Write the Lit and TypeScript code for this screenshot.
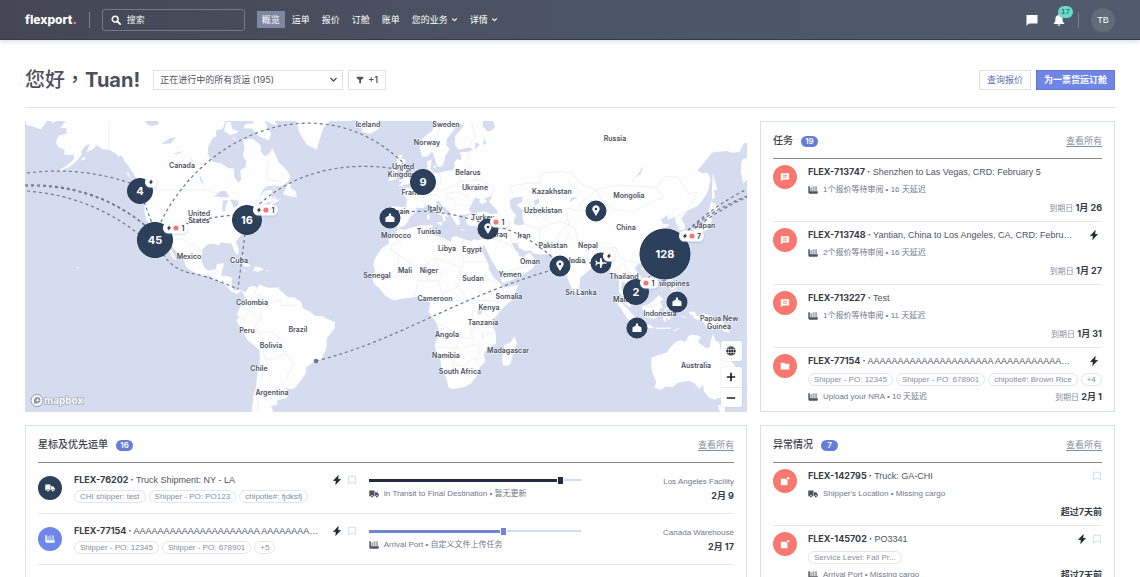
import { LitElement, html, svg, css, nothing } from "lit";
import { customElement, property } from "lit/decorators.js";
import { classMap } from "lit/directives/class-map.js";

/* ---------- geography ---------- */

const PX_PER_DEGREE = 2.13;
const RADIUS = (PX_PER_DEGREE * 180) / Math.PI;

function project(lon: number, lat: number): string {
  const merc = Math.log(Math.tan(Math.PI / 4 + (lat * Math.PI) / 360));
  return `${(409.5 + PX_PER_DEGREE * lon).toFixed(1)} ${(310 - RADIUS * merc).toFixed(1)}`;
}

function trace(points: string, close = true): string {
  const list = points
    .trim()
    .split(/\s+/)
    .map((p) => p.split(",").map(Number))
    .map(([lon, lat]) => project(lon, lat));
  return `M${list.join("L")}${close ? "Z" : ""}`;
}

const LAND = [
  // Americas
  `-168,70 -168,65.6 -164,66.2 -161,66.2 -164,64.7 -161,64.6 -161,63.5 -164.5,63.1 -166,61.6 -165,60.6 -162,59.9 -162,58.7 -158.8,58.6 -157.5,58.6 -157.6,57.5 -161,55.9 -164.8,54.6 -163,54.7 -159,55.8 -156,57.3 -153.8,58.8 -154.2,59.4 -152.2,60.8 -150,61.2 -151.6,59.3 -148.5,60 -147,61 -144,60 -141,59.9 -138,59 -136.6,58.2 -135,58.5 -134,57.3 -132,56 -130.5,54.6 -128,52.2 -127.3,51 -124.8,50 -123,49 -122.4,47.3 -124.7,48.3 -124,46.3 -124.5,42.8 -123.8,39.3 -122.4,37.5 -120.6,34.6 -118.4,33.8 -117.2,32.6 -116,30.5 -114.2,28.2 -115,27.8 -112.3,26 -112,24.6 -110,22.9 -109.5,23.3 -111.2,26 -112.8,28.4 -114.8,31.6 -113.1,31.2 -112,29 -109.4,26.5 -108,25 -106,23 -105.3,20.7 -104.3,19.2 -101.8,17.8 -98.5,16.3 -96,15.7 -94,16.2 -91.5,14 -87.7,13 -85.8,11 -83.7,8.8 -82.5,8.2 -81,7.4 -80,8.4 -79,8.9 -78,7.8 -77.4,6.5 -77.4,4 -79,1.8 -80,0.5 -81,-2.2 -80,-3.3 -81.3,-5 -79.5,-7.8 -77.2,-12 -76,-14 -73,-16.5 -70.4,-18.4 -70.2,-22 -70.8,-26 -71.6,-30 -72,-34 -73.3,-37.3 -73.6,-40 -74,-42 -73.2,-46 -67,-46 -65.3,-44.5 -64,-42.8 -65,-41 -62.3,-40.7 -62,-39 -57.6,-38.1 -56.8,-36.4 -58.4,-34 -56.5,-34.8 -54,-34.6 -51.5,-32 -48.6,-28.3 -48.5,-26 -44,-23 -42,-23 -40.5,-21 -39,-17.5 -38.8,-13 -37,-11 -35,-8.3 -35,-5.5 -37.5,-4.7 -41,-2.9 -44.5,-2.7 -47,-0.7 -50,0.8 -51,4 -54,5.9 -57,6 -60,8.5 -62,10.5 -66,10.4 -68.3,11 -70,12 -71.3,11 -71.2,9.5 -72,10.8 -73,11.3 -75.5,10.7 -77,8.2 -79.6,9.5 -82,9 -83.6,11 -83.2,14.9 -86,15.9 -88.5,15.8 -88,18.2 -86.9,21.4 -90.3,21.1 -91,18.8 -94.5,18.2 -96.2,19.3 -97.8,22.5 -97.2,27.5 -94.6,29.5 -91.5,29.6 -89.4,29 -88.5,30.3 -85.5,29.8 -83.8,30 -82.7,27.8 -81.2,25.2 -80.2,25.6 -80.2,27.5 -81.4,30.5 -79,33.2 -76,35 -76,37 -74.2,39.5 -73.8,40.8 -70.3,41.7 -70.8,43 -67,44.8 -64.8,45.5 -66,43.5 -63.5,44.6 -60.2,46.2 -61.5,45.9 -64.5,46.2 -65,47.8 -64.3,49 -67.5,48.8 -70.5,47 -68.5,49.3 -66.5,50.2 -60,50.2 -57,51.5 -55.8,53 -57.5,54.7 -61.5,56.8 -62.5,58.3 -64.5,60.3 -66,58.8 -68,58.3 -69.8,59.5 -69.8,60.9 -73.5,62.4 -78,62.4 -77.5,60 -78.3,58.5 -76.6,57 -77,55.5 -79.5,54.7 -79,52 -80.5,51.2 -82.3,53 -82.3,55.1 -85,55.3 -88.5,56.5 -92.5,57 -94.7,58.8 -94.5,60.5 -92.5,62.5 -90.5,63 -91,64 -87.5,64.6 -86.5,66 -86,70`,
  `-180,70 -180,65.2 -177,65 -173,64.3 -170,66.2 -175,67.2`,
  `-61,67.5 -64,66.4 -62,65.2 -65,65.4 -68,66.2 -66.5,64.6 -65,63.5 -66,62 -71,63 -74,64.5 -78,64.5 -77,65.4 -73.5,65.5 -72.5,70 -62,70`,
  `-87,64 -84,63.2 -81,63.6 -80.3,64 -83,64.3 -84,65.8 -86,65.8`,
  `-84,62.9 -82,62.5 -80,61.8 -82,62.2`,
  `-54,70 -53.5,67 -52,64 -50,62.3 -48,61 -43.5,59.9 -42.3,62 -40.5,64.5 -38,65.7 -33,68 -33,70`,
  `-24,65.5 -22.2,65.2 -24,64.8 -22,64.4 -22.6,63.9 -18.5,63.4 -14.8,64.3 -13.7,65 -14.8,66.1 -17,66.1 -20,66 -21.4,65.4 -22.5,66.4`,
  `-59.3,47.7 -55.8,46.9 -53,46.7 -53.2,48.5 -55.8,49.6 -55.6,51.5 -57.5,50.5`,
  `-128.3,50.6 -125,50 -123.4,48.5 -125.5,48.9`,
  `-133,54 -131.7,54 -131.3,52.3`,
  `-154.5,57.3 -152.2,58.3 -152.5,57.4`,
  `-64.4,46.9 -62,46.5 -63.5,46.2`,
  `-64.3,49.9 -61.8,49.1 -63.5,49.3`,
  `-85,22 -82.5,23.1 -79.5,22.8 -74.2,20.2 -77.5,19.9 -78,20.8 -82,22.3`,
  `-74.4,18.4 -72.7,18.5 -73.2,19.9 -69.9,19.7 -68.4,18.6 -71.5,17.7`,
  `-78.3,18.4 -76.3,18 -77.5,17.8`,
  `-67.2,18.5 -65.6,18.4 -67.1,18`,
  `-78.2,25.1 -77.8,24.3 -78.3,24.4`,
  `-61.8,10.7 -60.9,10.8 -61.1,10.1`,
  `-156,20.1 -155,19.5 -155.8,19.1`,
  // Eurasia and Africa
  `12,72 12.5,67.5 13,66 10.5,64 8,63.2 5.2,62 5,60 6,58.2 8.2,58.2 10.6,59.4 11.3,58.8 12.8,56 14.3,55.5 16,56.3 16.8,58.5 19,60 17.2,61 17.6,62.4 21.3,64.5 22,65.7 25.3,65.2 25,64.8 21.5,63 21.4,61 23,59.9 28,60.4 30,60 28,59.5 23.5,59.2 24.4,58.3 24,57.2 22.6,57.7 21.1,56.8 21.1,55.3 19.8,54.5 18.6,54.7 14.2,54 11,54 10.9,54.4 9.8,55 10.5,57.6 8.2,57 8.5,55 8.7,54 5,53.4 3.6,51.4 1.6,50.7 0,49.5 -1.5,49.7 -1.5,48.6 -4.7,48.4 -2.5,47.3 -1.2,46 -1.6,43.4 -4,43.5 -8,43.7 -9.2,42.8 -8.8,40 -9.4,38.7 -8.9,37 -6.4,36.8 -5.5,36 -2.2,36.8 -0.5,38.3 -0.3,39.5 3.2,42 3.2,43.2 6.5,43.1 8.8,44.4 10.5,43 12.3,41.7 15.6,40 16,38 17,39 16.6,40.3 18.4,40 16,41.9 13.6,43.6 12.4,45 13.7,45.6 15,44.2 18.8,42 19.5,40.5 21,38.5 22.5,36.6 24,37.8 22.8,39.8 24,40.8 26,40.8 29,41.2 28,42.7 29.7,45.2 31,46.6 33.5,46 32.6,45.4 34,44.4 36.4,45.3 35,46.3 39,47.2 37.4,45.2 39,44 41.5,42 41.3,41.2 38,41 35,42 32,41.6 29,41 26.3,40 27,37.3 28.5,36.7 30.6,36.8 32.5,36 36,36.8 35.8,35 34.6,31.7 32.5,31.2 30.5,31.4 29,30.8 25,31.6 22,32.8 20,32.3 19.5,30.4 15.3,32.3 11,33.3 10.3,34.5 11,37 5,36.8 0,35.8 -2.2,35.1 -5.4,35.9 -6.5,34 -9.8,31.4 -9.7,29.7 -13,27.8 -16,23.8 -17,21 -16.2,18.5 -17.4,14.7 -16.7,12.4 -13.5,9.5 -11.5,6.9 -7.6,4.4 -4,5.2 1,5.9 4.3,6.3 6,4.3 8.7,4.6 9.7,3.5 9.3,0.5 8.8,-0.8 12,-5 13.6,-8.5 13.5,-12.5 11.8,-16 12.5,-19 14.5,-22.8 15.2,-27 17.3,-30.5 18.3,-34 20,-34.8 25.7,-34 29,-32.5 32.3,-28.5 32.9,-26 35.5,-23.8 35,-20 37,-17.7 40.6,-15.5 40.5,-10.7 39.2,-8 38.8,-6 39.6,-4.3 41.7,-1.6 44,1.1 48,4.5 51.2,11.9 44.5,10.4 43.2,11.8 39.7,15 37.3,18.8 37.2,21 35.5,24 33.5,27.8 32.5,30 34.2,27.9 34.9,29.5 35.5,28 39,22 42.6,16.7 43.4,12.7 45,12.8 52,15.6 55.2,17.5 57.8,19 59.8,22.5 58.5,23.7 56.4,26.3 54,24.2 51.6,24.3 51,26 50,26.7 48,30 50.5,30 51.5,27.9 54.5,26.6 57,27 58,25.6 61.5,25.2 66.5,25.4 68.2,23.6 70.3,20.9 72.7,21.2 73,18 74.5,14 76.3,10 77.5,8 79.8,10.3 80.2,15 82.3,16.7 86.5,20 87,21.5 90.5,22.5 92,21.5 94.3,18.5 94.3,16 97,17 98.5,13 98.3,8.5 100.4,6 101,3 103.5,1.3 104.2,1.4 103.4,4.5 102,6.3 100.3,8.3 99.3,10.5 100,13.4 102.5,12 104.8,8.7 106.7,10.4 109.2,12 108.8,15.3 106,18.8 106,20 108.2,21.6 110,20.4 111,21.6 114,22.4 117,23.5 119.6,26 121.8,29 121.9,31.6 119.3,34.8 120.7,36.3 122.4,37.2 119,37.4 118,39 121,40.7 121.5,39 124.5,40 125.2,37.8 126.5,35 129.2,35.3 129.3,37 127.5,39.5 130.7,42.3 135.5,44 138.3,46.5 140.3,48.8 141.3,52.5 139.8,54.1 137.5,53.8 135.2,54.7 138,56.5 142,59.2 145.5,59.4 149,59.6 152,59.1 155,59.4 157,61.3 160,61.7 164,62.5 163,60 162,58 157,57.8 155.8,57 155.6,54 156.7,51 160,53 170,60 180,65 180,72`,
  `-5.5,50.1 -3.5,50.3 1.2,51.1 1.6,52.7 0.2,53 -1.5,55 -2.2,56 -1.9,57.6 -4,57.7 -3.2,58.6 -5,58.6 -6,56.7 -5,55 -3,54.9 -3,53.4 -4.5,53.3 -4.5,52.2 -5.1,51.7 -3,51.4`,
  `-10,51.6 -6.4,52.2 -6,53.5 -5.6,54.6 -7.3,55.3 -8.3,54.5 -10,54.2 -9,53.2`,
  `12.5,38 15.5,38.2 15.1,36.7`,
  `8.2,40.8 9.6,40.9 9.5,39.2 8.4,39`,
  `8.6,42.4 9.4,43 9.4,41.5`,
  `23.6,35.5 26.2,35.2 24.8,34.9`,
  `32.4,35 34.5,35.6 33.6,34.7`,
  `11,55.7 12.5,56 12,55`,
  `44,-25 43.3,-22 44.4,-19.5 44.3,-16.5 47.5,-15 49.3,-12.1 50.4,-15.5 49.4,-18 47.2,-24.8 45.4,-25.5`,
  `79.8,8.5 80.2,9.8 81.8,7.5 81,6.2 80,6.2`,
  `95.3,5.6 97.5,5.2 100.4,2.5 103,0 104.6,-2 106,-3.2 105.8,-5.8 104.5,-5.8 102.2,-4 100.3,-1 98.7,1.7`,
  `105.3,-6.8 106.2,-5.9 108.5,-6.7 110.8,-6.4 112.7,-6.9 114.5,-7.8 114.3,-8.6 110,-8.1 106.5,-7.4`,
  `115,-8.2 119,-8.3 122.8,-8.2 122.5,-8.8 119,-8.8 116,-8.9`,
  `123.6,-10.2 125,-8.9 127.2,-8.4 125,-9.6`,
  `109,1.5 109.7,2 111.3,2.4 113,3.2 115.5,5.4 117,7 119.2,5.2 117.8,4 118.9,1 117.4,0.5 116,-3.8 114.5,-4.1 111.5,-3.4 110,-1.4`,
  `119,-3.5 119.8,0.5 121,1.3 125,1.6 124,0.4 120.5,0.5 120.2,-0.9 123.3,-0.8 121.5,-1.9 122.8,-4.2 121.5,-4.6 120.8,-2.8 120.3,-5.5 119.5,-5.4`,
  `127.5,1.7 128.6,1.2 128,-0.7`,
  `126,-3.2 130.8,-3.5 129,-3 127.5,-3.2`,
  `131,-0.8 134,-0.8 135,-3.2 138,-1.7 141,-2.6 145,-4.2 147.8,-6.3 147,-7 150.7,-10.4 148,-10.2 144.5,-7.7 142.8,-9.2 139.5,-8.2 138,-5.5 133.5,-4 132.8,-2.8 134,-2.4 132,-2.3`,
  `148.5,-5.8 151,-5.6 152.3,-4.2 151.5,-4.3 149.8,-5.5`,
  `120.3,16 120.8,18.6 122.2,18.3 121.5,15.8 124,13 120.8,13.8`,
  `122,10.6 123.3,11.5 125.6,11.1 125,10.2 123,9.2`,
  `122,7 123.5,8.6 125.5,9.7 126.4,7 125.3,5.8 124,6.8`,
  `117.3,8.4 119.5,11.2 118.8,10`,
  `120.2,23 121.5,25.2 121,22.2`,
  `108.8,19.3 111,19.9 109.6,18.3`,
  `129.8,33 131,33.9 132,33 131,31.3 130.2,31.4`,
  `132.2,33.6 134.5,34.3 134,33.4`,
  `131,34.2 133,35.5 136,35.7 137,37.3 139.2,38 140,40 141.3,41.3 142,39.5 140.9,36 140,35.2 138,34.7 135.8,33.5 135.2,34.6`,
  `140.2,41.8 141.8,45.3 145.2,43.5 143.2,42.1`,
  `142,46 142,50 142.5,54 143.3,52 144.6,49 143,49 143.4,46.7`,
  `113.5,-22 114.2,-21.8 117,-20.7 121,-19.5 122.3,-17.3 125,-15 127,-13.9 129.5,-14.9 131,-12.2 132.6,-11.4 136.8,-12.2 135.5,-14.9 139.2,-17.5 140.9,-17.3 141.6,-14 142.5,-10.8 143.6,-14.2 145.4,-15 146.3,-18.8 149.5,-22 153,-25.3 153.4,-29 151.3,-33.5 150,-37.3 147,-38.2 144.5,-38.1 143.5,-38.8 140.5,-38 138.2,-35.6 137.8,-33 136,-34.7 134.2,-32.8 131.2,-31.5 126,-32.3 123.5,-33.9 120,-33.9 118,-35 115,-34.3 115.8,-32 114.2,-28.5 113.5,-26`,
  `144.7,-40.8 148.3,-40.9 148,-43 146.5,-43.6 145.3,-42.5`,
].map((p) => trace(p)).join("");

const LAKES = [
  `47,45.5 49,46.6 53,46.9 53,45.2 51,44.5 50.3,44.3 52.5,42.8 54.5,41.8 53,41.8 53,40 53.9,37.2 51,36.8 49,37.6 49.3,39.5 50.3,40.3 48.5,42 47.5,43.2`,
  `58.5,45.5 60.8,46.5 61,45 58.8,43.8`,
  `104,51.6 106,52.6 108.5,53.6 109.7,55.6 109,55.3 107,53.3 104.8,51.8`,
  `-92,46.8 -88.5,48.7 -86,48.6 -84.7,46.7 -87.5,46.6 -90,46.9`,
  `-87.8,42 -86.5,42 -86.3,44 -85,45.7 -87.5,45.6 -87.8,44`,
  `-84.5,45.8 -81,45.9 -80,44.6 -81.7,43.3 -82.5,43.2 -83.3,44.8`,
  `-83.2,41.8 -79,42.8 -81,41.8`,
  `-79.6,43.4 -76.4,44 -77,43.3`,
  `-98.7,53.7 -97.2,52 -96.5,50.5 -98,51.5`,
  `-124,66 -119,66.8 -117.5,65.4 -121,65 -123,65.3`,
  `-116.5,61.2 -112.5,62.5 -109.5,62.7 -112.3,61.3`,
  `-111,59 -106,59.6 -109,58.8`,
  `-102.5,58.3 -101.7,56.6 -102.4,57`,
  `31.8,0.3 34,0.3 33.8,-2 32,-2.4`,
  `29.3,-3.5 30.9,-8.4 30.1,-7`,
  `34,-10 35,-14 34.2,-12.5`,
  `30.8,60 33,61 31,61.7`,
  `34.5,61.1 36.3,61.2 35,62.6`,
  `34.5,66.8 39,66.2 40.3,64.8 38,64 36.5,64 34.5,65`,
  `76,46.6 79,46.8 75,45`,
].map((p) => trace(p)).join("");

const BORDERS = [
  "-141,59.9 -141,70",
  "-123,49 -95.2,49 -92,48.2 -89.5,48 -85,46.9 -82.5,45.3 -82.5,42 -79,43 -76.5,44.2 -74.7,45 -71.3,45.2 -69.2,47.4 -67.8,47 -67,44.8",
  "-117.2,32.6 -111,31.3 -106.5,31.8 -103,29 -101,29.5 -97.2,26",
  "-92.2,14.6 -91,17.6 -89.2,17.8",
  "-79,1.3 -75.2,0 -70,-4.2 -70,1.5 -67,1.5 -67.5,6 -72,7.2 -73,11",
  "-80.2,-3.4 -78,-4.8 -75.2,0",
  "-70,-4.2 -73,-7.3 -70.5,-11 -69,-12.5 -69.5,-17.5 -67,-23 -69.5,-30 -71,-38 -71.5,-44",
  "-70.5,-11 -65.3,-10 -60,-14 -58,-20 -62.5,-22.3 -67,-22.5",
  "-58,-20 -54.3,-24.5 -57.6,-30.2 -53.3,-33.7",
  "-67,1.5 -64,4 -60.7,5 -59.8,2 -52,2.3",
  "-2,35 -1.5,32.2 -8.7,28.7 -8.7,27.3 4.2,19.2 12,23.4 15,23 24,19.5 25,20 25,31.5",
  "25,22 37,22", "12,23.4 15.5,16 13.5,13.5 4,13.5 3.6,11.7 2.7,6.3",
  "13.5,13.5 15,9 15.5,7.5 22.8,11 24,15.7 24,19.5", "-8.7,27.3 -5,25 -6,15.5 -12,15.2 -16.5,16",
  "15.5,7.5 14.5,4.7 16.2,2.2 18.6,4 27.4,5 34,4.3 36,4.5 41.5,4 45,5 48,8",
  "22.8,11 27.4,5", "27.4,5 31,2.2 29.6,-1.3 29.4,-4.5 30.8,-8.3 28.5,-9.2 29.8,-13.4 24,-12.9 24,-10.9 22,-11 17.5,-8 12.3,-6",
  "24,-12.9 22,-16.2 23.4,-17.6 11.8,-17.3", "21,-18 21,-22 20,-28.5 16.5,-28.6", "20,-24.8 25.6,-25.6 29.4,-22.2 31.3,-22.4 32.8,-26",
  "25.3,-17.8 30.4,-15.7 32.8,-17 32.4,-21.3 31.3,-22.4", "34,-0.9 37.6,-3 39.2,-4.6", "34.6,-11.6 40.4,-10.5", "41,4 41,-1.6",
  "36.5,14.3 33,11 33,8 36,4.5", "36.5,14.3 42.4,12.5", "-1.8,43.3 3,42.4", "-7,41.9 -7,37.2",
  "2.6,51 6,49.5 8,49 7.6,47.6 6,46.3 7.5,43.8", "7,53.2 6,51 6,49.5", "7.6,47.6 13,47.5 13.7,46.5", "14.2,53.9 15,51 12,50.3 13.8,48.8 18.8,49.5 23.5,51.5 23.6,54 21,55.3",
  "17,48 22,48.4 24,47.9 28,46.8 28.2,45.5", "16.5,46.5 20,46.1 22.7,44.2 28,43.8", "23.6,51.5 31,52 34,52 40,49.6 38.2,47.1", "28,56.2 31,53 31.5,52", "27.5,57.5 28,59.4",
  "11.5,59 12.3,62 14,64.5 16,67", "28,61 31,62.8 29,66",
  "47,45.6 49,47.5 47,50 55,51 61,51 62,54 71,54.3 76,54 80,51 87.3,49.1 85,47 80,45 80.2,42.2 74,43 70,42 66,41.5 66,43 61,44.5 56,45 56,41.3 52.5,42",
  "87.3,49.1 98,50.5 103,50.2 116,49.8 120,53 126,52.8 131,47.8 135,48.4 131,43", "87.3,49.1 91,45 96,42.7 105,41.7 112,44.5 119.5,46.8 116,49.8",
  "74,43 74,39.5 75,37 78,35.4 79,31 82,30.2 88,28 92,27.8 97,28.2 98.5,24 102,22.4 108,21.5",
  "82,30.2 80.2,28.7 88,26.5 88,28", "75,37 70,34 69.5,31.8 66.4,29.8 61,29.8 61.5,25.2", "75,34 71,27.8 68.2,23.8", "61,29.8 61,35.5 66.5,37.4 71,38.3 75,37", "54,37.3 61,35.5", "56,41.3 60,42 66.5,37.4",
  "44.5,39.7 45.5,36 48,31 48,30", "36,36.8 42.3,37.2 44.8,37.2", "35,29.5 39,32 47,29.2 48.5,28.5", "43,17.4 49,18.5 55,20 55,22.7 52,23", "92.3,21 92.5,24 97,28", "88.8,26 89,22", "97.8,17 98.5,20 101,21.5 102.1,18 105.5,14.4 102.5,12.5", "105.5,14.4 107.5,12.5", "125,40 130.6,42.4", "126.8,37.8 128.3,38.6",
  "141,-2.6 141,-9.1", "109.6,1.8 114.5,1.5 117.8,4.2", "-60,51.5 -67,52 -67,55 -64.5,60",
].map((p) => trace(p, false)).join("");

const LABELS: [string, number, number][] = [
  ["Iceland", 368, 127], ["Sweden", 446, 127], ["Norway", 427, 145], ["United", 403, 169], ["Kingdom", 403, 177],
  ["Belarus", 468, 175], ["Ukraine", 475, 190], ["France", 413, 195], ["Spain", 400, 214], ["Italy", 435, 211],
  ["Turkey", 483, 220], ["Iraq", 501, 237], ["Iran", 524, 238], ["Morocco", 396, 238], ["Tunisia", 429, 234],
  ["Libya", 447, 251], ["Egypt", 472, 252], ["Oman", 530, 264], ["Senegal", 377, 278], ["Mali", 405, 273],
  ["Niger", 429, 273], ["Sudan", 473, 281], ["Yemen", 510, 277], ["Somalia", 509, 299], ["Cameroon", 435, 301],
  ["Kenya", 489, 310], ["Tanzania", 483, 325], ["Angola", 447, 337], ["Namibia", 446, 358], ["Madagascar", 508, 353],
  ["South Africa", 460, 374], ["Canada", 182, 168], ["United", 199, 216], ["States", 199, 223], ["Mexico", 189, 259],
  ["Cuba", 239, 263], ["Colombia", 252, 305], ["Peru", 247, 333], ["Brazil", 298, 332], ["Bolivia", 271, 348],
  ["Chile", 259, 371], ["Argentina", 272, 395], ["Russia", 615, 141], ["Kazakhstan", 552, 194], ["Mongolia", 629, 198],
  ["Uzbekistan", 543, 213], ["China", 626, 230], ["Pakistan", 553, 248], ["Nepal", 588, 248], ["India", 577, 263],
  ["Japan", 705, 228], ["Thailand", 624, 279], ["Philippines", 671, 286], ["Sri Lanka", 581, 295], ["Malaysia", 628, 302],
  ["Indonesia", 660, 316], ["Papua New", 719, 321], ["Guinea", 719, 329], ["Australia", 696, 368],
];

const ROUTES = [
  "M27 173Q82 166 133 184", "M25 185Q95 183 146 226", "M25 186Q95 184 147 227", "M27 191Q92 196 141 236",
  "M161 222C205 130 330 80 412 172", "M180 226Q206 217 235 215", "M144 202L152 223",
  "M255 208C300 165 360 160 412 172", "M245 234L238 289", "M163 254C172 268 182 272 200 275C215 279 228 285 238 289",
  "M316 361C400 340 450 300 552 270", "M400 213Q435 207 480 222", "M497 226Q530 236 554 259",
  "M688 230Q714 206 747 189", "M688 231Q716 208 747 196", "M690 232Q718 210 747 197", "M571 262L592 263", "M654 272L643 284",
];

type Glyph = "pin" | "port" | "plane";
interface MapNode { x: number; y: number; r: number; count?: string; glyph?: Glyph }
const NODES: MapNode[] = [
  { x: 140, y: 191, r: 12.5, count: "4" }, { x: 155, y: 240, r: 17.5, count: "45" }, { x: 247, y: 220, r: 14.5, count: "16" },
  { x: 423, y: 182, r: 12.5, count: "9" }, { x: 390, y: 218, r: 10, glyph: "port" }, { x: 488, y: 229, r: 10, glyph: "pin" },
  { x: 596, y: 211, r: 10, glyph: "pin" }, { x: 560, y: 266, r: 10, glyph: "pin" }, { x: 601, y: 263, r: 10, glyph: "plane" },
  { x: 665, y: 254, r: 25, count: "128" }, { x: 636, y: 292, r: 12.5, count: "2" }, { x: 677, y: 302, r: 10, glyph: "port" },
  { x: 637, y: 328, r: 10, glyph: "port" },
];

const FLAGS: { x: number; y: number; bolt: boolean; alerts?: string }[] = [
  { x: 145, y: 182, bolt: true }, { x: 163, y: 228, bolt: true, alerts: "1" }, { x: 253, y: 210, bolt: true, alerts: "1" },
  { x: 490, y: 222, bolt: false, alerts: "1" }, { x: 603, y: 256, bolt: true }, { x: 679, y: 236, bolt: true, alerts: "7" },
  { x: 640, y: 283, bolt: false, alerts: "1" },
];

/* ---------- icons, each on a 12 unit grid ---------- */

const boltPath = "M7.6 0.5L1.6 6.8H5L4.4 11.5L10.4 5.2H7Z";

const ICONS = {
  search: svg`<circle cx="5" cy="5" r="3.5" fill="none" stroke="currentColor" stroke-width="1.8"/><path d="M7.6 7.6L11 11" stroke="currentColor" stroke-width="2.2" stroke-linecap="round"/>`,
  chevron: svg`<path d="M2 4L6 8L10 4" fill="none" stroke="currentColor" stroke-width="1.8"/>`,
  filter: svg`<path d="M1 1H11V3.5L7.6 6V11H4.8V6L1 3.5Z" fill="currentColor"/>`,
  chat: svg`<path d="M0.5 1H11.5V9.5H3L0.5 11.8Z" fill="currentColor"/>`,
  bell: svg`<path d="M6 0.3C6.7 0.3 7 0.8 7 1.3C8.8 1.8 9.6 3.2 9.6 5C9.6 7.3 10 8.3 11.3 9.4V10H0.7V9.4C2 8.3 2.4 7.3 2.4 5C2.4 3.2 3.2 1.8 5 1.3C5 0.8 5.3 0.3 6 0.3ZM4.6 10.5H7.4A1.4 1.4 0 0 1 4.6 10.5Z" fill="currentColor"/>`,
  bolt: svg`<path d="${boltPath}" fill="currentColor" stroke="currentColor" stroke-width="0.6" stroke-linejoin="round"/>`,
  bookmark: svg`<path d="M2 1.5H10V10.8L6 8L2 10.8Z" fill="none" stroke="currentColor" stroke-width="0.9"/>`,
  truck: svg`<path d="M0.3 1.8H6.6V8.6H5A1.4 1.4 0 0 0 2.2 8.6H0.3ZM7.2 4H9.6L11.8 6.4V8.6H10.8A1.4 1.4 0 0 0 8 8.6H7.2Z" fill="currentColor"/><circle cx="3.6" cy="9" r="1.1" fill="currentColor"/><circle cx="9.4" cy="9" r="1.1" fill="currentColor"/>`,
  ship: svg`<path d="M0.4 1.5H2.2V7.6H11.8V9L11 10.4H1.4L0.4 9Z" fill="currentColor"/><path d="M2.8 2.6H4.9V7.2H2.8ZM5.5 1.6H7.8V7.2H5.5ZM8.6 1.6H10.9V7.2H8.6Z" fill="currentColor" opacity="0.5"/>`,
  quote: svg`<path d="M1 1.5H11V9H4L1 11.2Z" fill="currentColor"/><path d="M3.5 3.9H8.5M3.5 6.2H8.5" stroke="#f8776f" stroke-width="1"/>`,
  folder: svg`<path d="M0.8 2H5L6.2 3.3H11.2V10.2H0.8Z" fill="currentColor"/>`,
  cargo: svg`<path d="M1 3.2H7.4A2 2 0 0 0 9 5V11H1Z" fill="currentColor"/><circle cx="9.8" cy="2.8" r="1.5" fill="currentColor"/>`,
  globe: svg`<circle cx="6" cy="6" r="5.6" fill="currentColor"/><path d="M6 0V12M0.5 4.2H11.5M0.5 7.8H11.5M4 0.5C2.4 4 2.4 8 4 11.5M8 0.5C9.600 4 9.600 8 8 11.5" fill="none" stroke="#fff" stroke-width="0.7"/>`,
  plus: svg`<path d="M6 1V11M1 6H11" stroke="currentColor" stroke-width="2"/>`,
  minus: svg`<path d="M1 6H11" stroke="currentColor" stroke-width="2"/>`,
};
type IconName = keyof typeof ICONS;

@customElement("fx-icon")
class FxIcon extends LitElement {
  static styles = css`
    :host { display: inline-flex; flex: none; width: 10px; height: 10px; }
    svg { display: block; width: 100%; height: 100%; }
  `;
  @property() name: IconName = "bolt";
  render() {
    return html`<svg viewBox="0 0 12 12" aria-hidden="true">${ICONS[this.name]}</svg>`;
  }
}

/* ---------- map ---------- */

@customElement("shipment-map")
class ShipmentMap extends LitElement {
  static styles = css`
    :host { display: block; position: relative; overflow: hidden; background: #d5dcf0; }
    .canvas { display: block; width: 100%; height: 100%; }
    .land { fill: #fefefe; }
    .lake { fill: #d5dcf0; }
    .border { fill: none; stroke: #eceef6; stroke-width: 0.8; }
    .route { fill: none; stroke: #70768a; stroke-width: 1.2; stroke-dasharray: 3 3; }
    text { font-family: Inter, sans-serif; text-anchor: middle; }
    .place { font-size: 7px; font-weight: 600; fill: #4c505f; stroke: #fff; stroke-width: 1.2px; paint-order: stroke; stroke-opacity: 0.7; }
    .node { fill: #2c405b; stroke: #22344c; stroke-width: 1; }
    .count { font-size: 11px; font-weight: 700; fill: #fff; }
    .glyph { fill: #fff; }
    .flag { fill: #fff; filter: drop-shadow(0 1px 1px #6b7aa04d); }
    .flag-bolt { fill: #22252f; }
    .alert { fill: #ee7b74; }
    .alerts { font-size: 7px; font-weight: 600; fill: #2f3340; }
    .controls { position: absolute; right: 5px; bottom: 5px; display: flex; flex-direction: column; gap: 6px; }
    .group { display: flex; flex-direction: column; border-radius: 3px; background: #fff; overflow: hidden; box-shadow: 0 0 1px #9aa5c4; }
    button { display: flex; align-items: center; justify-content: center; width: 21px; height: 20px; padding: 0; border: 0; background: #fff; color: #1c1e26; }
    button + button { border-top: 1px solid #e4e7f0; }
    .brand { position: absolute; left: 5px; bottom: 4px; width: 56px; height: 15px; }
    .brand text { font-size: 10px; font-weight: 700; text-anchor: start; fill: #fff; stroke: #9098b0; stroke-width: 1.2px; paint-order: stroke; }
  `;

  private glyph({ x, y, glyph }: MapNode) {
    if (glyph === "pin")
      return svg`<path class="glyph" fill-rule="evenodd" d="M${x} ${y + 5}L${x - 3} ${y}A3.6 3.6 0 1 1 ${x + 3} ${y}ZM${x - 1.3} ${y - 2}a1.3 1.3 0 1 0 2.6 0a1.3 1.3 0 1 0 -2.6 0Z"/>`;
    if (glyph === "port")
      return svg`<path class="glyph" d="M${x - 4.5} ${y + 4}V${y - 0.6}L${x - 1} ${y - 2.4}V${y - 4.5}H${x + 1}V${y - 2.4}L${x + 4.5} ${y - 0.6}V${y + 4}Z"/>`;
    return svg`<path class="glyph" transform="rotate(180 ${x} ${y})" d="M${x - 5.5} ${y - 0.8}H${x - 1.6}L${x - 0.4} ${y - 5}H${x + 0.8}L${x + 1.2} ${y - 0.8}H${x + 3.4}L${x + 4.6} ${y - 2.4}H${x + 5.5}L${x + 5} ${y}L${x + 5.5} ${y + 2.4}H${x + 4.6}L${x + 3.4} ${y + 0.8}H${x + 1.2}L${x + 0.8} ${y + 5}H${x - 0.4}L${x - 1.6} ${y + 0.8}H${x - 5.5}Z"/>`;
  }

  private flag({ x, y, bolt, alerts }: (typeof FLAGS)[number]) {
    const width = alerts ? (bolt ? 25 : 19) : 12;
    const dot = bolt ? x + 13 : x + 6;
    return svg`
      <rect class="flag" x=${x} y=${y - 5.5} width=${width} height="11" rx="5.5"/>
      ${bolt ? svg`<path class="flag-bolt" transform="translate(${x + 3} ${y - 3}) scale(0.5)" d=${boltPath}/>` : nothing}
      ${alerts ? svg`<circle class="alert" cx=${dot} cy=${y} r="2.6"/><text class="alerts" x=${dot + 7} y=${y + 2.5}>${alerts}</text>` : nothing}`;
  }

  render() {
    return html`
      <svg class="canvas" viewBox="25 121 722 291" preserveAspectRatio="xMidYMid slice" role="img" aria-label="货运地图">
        <path class="land" d=${LAND} />
        <path class="border" d=${BORDERS} />
        <path class="lake" d=${LAKES} />
        ${LABELS.map(([name, x, y]) => svg`<text class="place" x=${x} y=${y}>${name}</text>`)}
        ${ROUTES.map((d) => svg`<path class="route" d=${d}/>`)}
        <circle cx="316" cy="361" r="2.3" fill="#70768a" />
        ${NODES.map((n) => svg`
          <circle class="node" cx=${n.x} cy=${n.y} r=${n.r}/>
          ${n.count ? svg`<text class="count" x=${n.x} y=${n.y + 4}>${n.count}</text>` : this.glyph(n)}`)}
        ${FLAGS.map((f) => this.flag(f))}
      </svg>
      <svg class="brand" viewBox="0 0 56 15" aria-label="mapbox">
        <circle cx="7" cy="7.5" r="6" fill="#fff" stroke="#9098b0" />
        <path d="M4 10.5C3.5 6 5 4 7.5 4A3 3 0 0 1 10.5 7.2C10.5 9.5 8 11 4 10.5Z" fill="#8c94aa" />
        <path d="M7.6 5.2L8.2 6.6L9.6 7.2L8.2 7.8L7.6 9.2L7 7.8L5.6 7.2L7 6.6Z" fill="#fff" />
        <text x="14" y="11">mapbox</text>
      </svg>
      <div class="controls">
        <div class="group"><button aria-label="全球"><fx-icon name="globe"></fx-icon></button></div>
        <div class="group">
          <button aria-label="放大"><fx-icon name="plus"></fx-icon></button>
          <button aria-label="缩小"><fx-icon name="minus"></fx-icon></button>
        </div>
      </div>`;
  }
}

/* ---------- data ---------- */

interface Entry {
  icon: IconName; id: string; name: string; tags?: string[]; mode: IconName; status: string;
  due?: string; date: string; bolt?: boolean; bookmark?: boolean;
}
const TASKS: Entry[] = [
  { icon: "quote", id: "FLEX-713747", name: "Shenzhen to Las Vegas, CRD: February 5", mode: "ship", status: "1个报价等待审阅 • 16 天延迟", due: "到期日", date: "1月 26" },
  { icon: "quote", id: "FLEX-713748", name: "Yantian, China to Los Angeles, CA, CRD: February 12", mode: "ship", status: "2个报价等待审阅 • 16 天延迟", due: "到期日", date: "1月 27", bolt: true },
  { icon: "quote", id: "FLEX-713227", name: "Test", mode: "ship", status: "1个报价等待审阅 • 11 天延迟", due: "到期日", date: "1月 31" },
  { icon: "folder", id: "FLEX-77154", name: "AAAAAAAAAAAAAAAAAAAAA AAAAAAAAAAAAAAAAAAAAA", tags: ["Shipper - PO: 12345", "Shipper - PO: 678901", "chipotle#: Brown Rice", "+4"], mode: "ship", status: "Upload your NRA • 10 天延迟", due: "到期日", date: "2月 1", bolt: true },
];
const EXCEPTIONS: Entry[] = [
  { icon: "cargo", id: "FLEX-142795", name: "Truck: GA-CHI", mode: "truck", status: "Shipper's Location • Missing cargo", date: "超过7天前", bookmark: true },
  { icon: "cargo", id: "FLEX-145702", name: "PO3341", tags: ["Service Level: Fall Pr..."], mode: "ship", status: "Arrival Port • Missing cargo", date: "超过7天前", bolt: true, bookmark: true },
];
const SHIPMENTS = [
  { icon: "truck" as IconName, tone: "navy", id: "FLEX-76202", name: "Truck Shipment: NY - LA", tags: ["CHI shipper: test", "Shipper - PO: PO123", "chipotle#: fjdksfj"], progress: 89, status: "In Transit to Final Destination • 暂无更新", place: "Los Angeles Facility", date: "2月 9" },
  { icon: "ship" as IconName, tone: "blue", id: "FLEX-77154", name: "AAAAAAAAAAAAAAAAAAAAA AAAAAAAAAAAAAAAAAAAAA", tags: ["Shipper - PO: 12345", "Shipper - PO: 678901", "+5"], progress: 62, status: "Arrival Port • 自定义文件上传任务", place: "Canada Warehouse", date: "2月 17" },
];
const NAV = [
  { text: "概览", active: true }, { text: "运单" }, { text: "报价" }, { text: "订舱" }, { text: "账单" },
  { text: "您的业务", menu: true }, { text: "详情", menu: true },
];

/* ---------- page ---------- */

@customElement("app-root")
class AppRoot extends LitElement {
  static styles = css`
    :host {
      display: flex; flex-direction: column; height: 100vh; overflow: hidden; background: #fff; color: #50535f;
      font: 9px/14px "Liberation Sans", "Noto Sans CJK SC", sans-serif;
    }
    * { box-sizing: border-box; }
    a { color: inherit; text-decoration: none; }
    button, input, select { font: inherit; color: inherit; }

    .top {
      flex: none; display: flex; align-items: center; height: 40px; padding: 0 25px; color: #fff;
      background: linear-gradient(90deg, #444653, #4c5565 50%, #4f5b6d); border-bottom: 1px solid #363a47; box-shadow: 0 2px 4px #5058702e;
    }
    .logo { font-family: Inter, sans-serif; font-size: 12px; font-weight: 800; line-height: 20px; }
    .logo-dot { color: #e98a86; }
    .rule { width: 1px; height: 16px; background: #7b8090; }
    .logo + .rule { margin: 0 12px; }
    .search { display: flex; align-items: center; gap: 6px; width: 143px; height: 22px; padding: 0 8px; border: 1px solid #777a86; border-radius: 3px; }
    .search input { min-width: 0; flex: 1; padding: 0; border: 0; outline: 0; background: none; }
    .search input::placeholder { color: #f1f2f5; opacity: 1; }
    .nav { display: flex; gap: 2px; margin-left: 12px; }
    .nav a { display: flex; align-items: center; gap: 3px; height: 17px; padding: 0 5px; }
    .nav a.active { background: #7e88a5; }
    .nav fx-icon { width: 7px; height: 7px; }
    .tools { display: flex; align-items: center; margin-left: auto; }
    .tools button { position: relative; display: flex; padding: 0; border: 0; background: none; color: #fff; }
    .tools fx-icon { width: 12px; height: 12px; }
    .bell { margin: 0 13px 0 15px; }
    .bell-count { position: absolute; left: 5px; top: -8px; width: 15px; height: 12px; border-radius: 6px; background: #66d9c7; color: #2d4f5c; font-size: 8px; line-height: 12px; text-align: center; }
    .tools .avatar { align-items: center; justify-content: center; width: 24px; height: 24px; margin-left: 12px; border-radius: 50%; background: #626b7b; font-size: 9px; }

    main { flex: 1; min-height: 0; padding: 0 25px; overflow: auto; scrollbar-width: none; }
    .welcome { display: flex; align-items: center; height: 68px; padding-top: 12px; border-bottom: 1px solid #dde2ee; margin-bottom: 13px; }
    h1 { margin: 0 13px 0 0; font: 700 20px/28px Inter, "Noto Sans CJK TC", sans-serif; color: #4d505c; }
    .hello { font-weight: 500; }
    .picker { position: relative; display: flex; align-items: center; width: 190px; margin-right: 5px; }
    .picker select { width: 100%; height: 20px; padding: 0 6px; border: 1px solid #dde0e9; border-radius: 0; background: #fff; appearance: none; outline: 0; font-family: Inter, "Noto Sans CJK SC", sans-serif; }
    .picker fx-icon { position: absolute; right: 5px; width: 9px; height: 9px; pointer-events: none; }
    .btn { display: flex; align-items: center; gap: 4px; height: 20px; padding: 0 7px; border: 1px solid #dde0e9; background: #fff; }
    .btn fx-icon { width: 8px; height: 8px; }
    .filter { font-family: Inter, sans-serif; font-weight: 600; }
    .quote { margin-left: auto; margin-right: 5px; color: #5b6fb5; }
    .primary { background: #6f86e8; border-color: #6677c4; color: #fff; font-weight: 600; }

    .board { display: grid; grid-template-columns: minmax(0, 61fr) minmax(0, 30fr); gap: 13px; }
    shipment-map { min-height: 291px; height: 0; min-width: 0; align-self: stretch; }
    .panel { padding: 0 12px; border: 1px solid #d9dff0; background: #fff; overflow: hidden; }
    .head { display: flex; align-items: center; height: 37px; padding-top: 2px; border-bottom: 1px solid #85878f; }
    h2 { margin: 0 8px 0 0; font-size: 10px; line-height: 16px; font-weight: 500; color: #3e414d; }
    .badge { min-width: 17px; height: 11px; padding: 0 4px; border-radius: 6px; background: #667dd8; color: #fff; font-family: Inter, sans-serif; font-size: 8px; font-weight: 600; line-height: 11px; text-align: center; }
    .all { margin-left: auto; color: #8a8e9c; text-decoration: underline; text-underline-offset: 2px; }
    ul { margin: 0; padding: 0; list-style: none; }
    b { font-family: Inter, "Noto Sans CJK SC", sans-serif; font-weight: 700; color: #383b47; }

    .entry { display: grid; grid-template-columns: 24px minmax(0, 1fr); gap: 11px; padding: 6px 0 4px; border-bottom: 1px solid #e6e8ee; }
    .entry:last-child { border-bottom: 0; }
    .circle { display: flex; align-items: center; justify-content: center; width: 24px; height: 24px; border-radius: 50%; color: #fff; }
    .red { background: #f8776f; }
    .navy { background: #2c405b; }
    .blue { background: #6f86e8; }
    .title { display: flex; align-items: center; gap: 8px; line-height: 14px; }
    .name { flex: 0 1 266px; min-width: 0; overflow: hidden; text-overflow: ellipsis; white-space: nowrap; }
    .marks { display: flex; align-items: center; gap: 5px; margin-left: auto; color: #22252f; }
    .marks .bookmark { color: #cbd1de; }
    .marks .bolt:last-child { margin-right: 3px; }
    .row { display: flex; align-items: center; height: 18px; }
    .title + .row { margin-top: 2px; }
    .tags { gap: 3px; }
    .tag { height: 13px; padding: 0 5px; border: 1px solid #e2e5ed; border-radius: 7px; color: #8a8e9c; font-size: 8px; line-height: 11px; white-space: nowrap; }
    .status { display: flex; align-items: center; gap: 5px; font-size: 8px; color: #73778a; white-space: nowrap; }
    .status fx-icon { color: #50535f; }
    .due { margin-left: auto; font-size: 8px; color: #8a8e9c; white-space: nowrap; }
    .due b, .where b { font-size: 9px; }

    .shipment { display: grid; grid-template-columns: 24px minmax(0, 4fr) minmax(0, 3fr) minmax(0, 2fr); gap: 12px; padding: 10px 0; border-bottom: 1px solid #e6e8ee; }
    .shipment .circle { align-self: center; }
    .shipment .name { flex-basis: 251px; }
    .shipment .row { height: 14px; }
    .track { display: flex; align-items: center; height: 14px; }
    .bar { height: 3px; }
    .rest { flex: 1; height: 2px; background: #d3dcf6; }
    .knob { width: 5px; height: 7px; margin: 0 1px; }
    .navy-bar { background: #222c42; }
    .blue-bar { background: #6f86d8; }
    .where { display: flex; flex-direction: column; align-items: flex-end; padding-top: 2px; font-size: 8px; color: #73778a; }
  `;

  private head(title: string, count: number) {
    return html`<div class="head"><h2>${title}</h2><span class="badge">${count}</span><a class="all" href="#">查看所有</a></div>`;
  }

  private tags(list: string[]) {
    return html`<div class="row tags">${list.map((t) => html`<span class="tag">${t}</span>`)}</div>`;
  }

  private marks(bolt?: boolean, bookmark?: boolean) {
    return html`<span class="marks">
      ${bolt ? html`<fx-icon class="bolt" name="bolt"></fx-icon>` : nothing}
      ${bookmark ? html`<fx-icon class="bookmark" name="bookmark"></fx-icon>` : nothing}
    </span>`;
  }

  private entry(e: Entry) {
    const status = html`<span class="status"><fx-icon name=${e.mode}></fx-icon>${e.status}</span>`;
    const due = html`<span class="due">${e.due} <b>${e.date}</b></span>`;
    return html`<li class="entry">
      <span class="circle red"><fx-icon name=${e.icon}></fx-icon></span>
      <div>
        <div class="title"><span class="name"><b>${e.id} ·</b> ${e.name}</span>${this.marks(e.bolt, e.bookmark)}</div>
        ${e.tags ? this.tags(e.tags) : html`<div class="row">${status}</div>`}
        <div class="row">${e.tags ? status : nothing}${due}</div>
      </div>
    </li>`;
  }

  private shipment(s: (typeof SHIPMENTS)[number]) {
    const bar = { "navy-bar": s.tone === "navy", "blue-bar": s.tone === "blue" };
    return html`<li class="shipment">
      <span class=${classMap({ circle: true, [s.tone]: true })}><fx-icon name=${s.icon}></fx-icon></span>
      <div>
        <div class="title"><span class="name"><b>${s.id} ·</b> ${s.name}</span>${this.marks(true, true)}</div>
        ${this.tags(s.tags)}
      </div>
      <div>
        <div class="track" role="progressbar" aria-label=${s.id} aria-valuenow=${s.progress}>
          <span class=${classMap({ bar: true, ...bar })} style="width:${s.progress}%"></span>
          <span class=${classMap({ knob: true, ...bar })}></span>
          <span class="rest"></span>
        </div>
        <div class="status"><fx-icon name=${s.icon}></fx-icon>${s.status}</div>
      </div>
      <div class="where"><span>${s.place}</span><b>${s.date}</b></div>
    </li>`;
  }

  render() {
    return html`
      <header class="top">
        <a class="logo" href="#">flexport<span class="logo-dot">.</span></a>
        <span class="rule"></span>
        <label class="search"><fx-icon name="search"></fx-icon><input type="text" placeholder="搜索" aria-label="搜索" /></label>
        <nav class="nav">
          ${NAV.map((n) => html`<a href="#" class=${classMap({ active: !!n.active })}>${n.text}${n.menu ? html`<fx-icon name="chevron"></fx-icon>` : nothing}</a>`)}
        </nav>
        <div class="tools">
          <button aria-label="消息"><fx-icon name="chat"></fx-icon></button>
          <button class="bell" aria-label="通知"><fx-icon name="bell"></fx-icon><span class="bell-count">17</span></button>
          <span class="rule"></span>
          <button class="avatar">TB</button>
        </div>
      </header>
      <main>
        <div class="welcome">
          <h1><span class="hello">您好，</span>Tuan!</h1>
          <div class="picker">
            <select aria-label="货运"><option>正在进行中的所有货运 (195)</option></select>
            <fx-icon name="chevron"></fx-icon>
          </div>
          <button class="btn filter"><fx-icon name="filter"></fx-icon>+1</button>
          <button class="btn quote">查询报价</button>
          <button class="btn primary">为一票货运订舱</button>
        </div>
        <div class="board">
          <shipment-map></shipment-map>
          <section class="panel">${this.head("任务", 19)}<ul>${TASKS.map((e) => this.entry(e))}</ul></section>
          <section class="panel">${this.head("星标及优先运单", 16)}<ul>${SHIPMENTS.map((s) => this.shipment(s))}</ul></section>
          <section class="panel">${this.head("异常情况", 7)}<ul>${EXCEPTIONS.map((e) => this.entry(e))}</ul></section>
        </div>
      </main>`;
  }
}
